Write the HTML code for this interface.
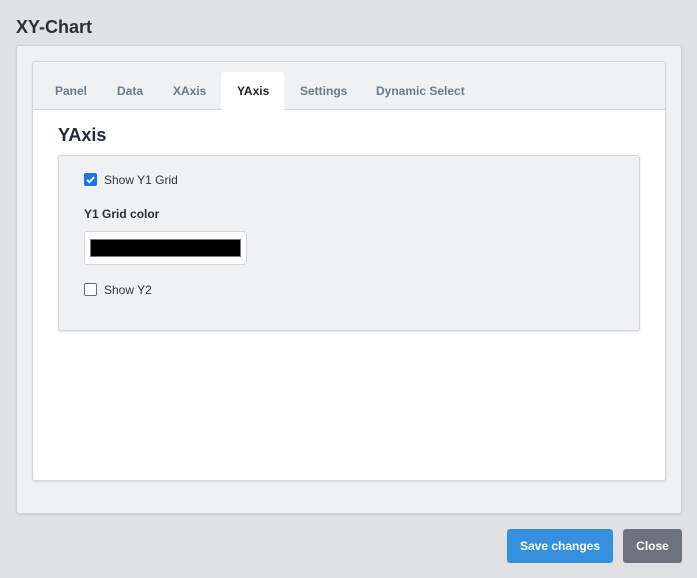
<!DOCTYPE html>
<html><head><style>
*{box-sizing:border-box;margin:0;padding:0}
body{width:697px;height:578px;background:#dfe1e5;font-family:"Liberation Sans",sans-serif;position:relative;overflow:hidden}
.a{position:absolute}
.tab{position:absolute;top:84px;font-size:12px;font-weight:bold;color:#6b7b8c}
.cb{position:absolute;width:13px;height:13px;border-radius:2px}
</style></head><body>
<div class="a" style="left:16px;top:17px;font-size:18px;font-weight:bold;color:#2d2f33">XY-Chart</div>
<div class="a" style="left:16px;top:45px;width:666px;height:469px;background:#f0f1f3;border:1px solid #cfd2d6;border-radius:3px;box-shadow:0 1px 2px rgba(0,0,0,.1)"></div>
<div class="a" style="left:32px;top:61px;width:634px;height:420px;background:#fff;border:1px solid #d4d7db;border-radius:3px;box-shadow:0 1px 2px rgba(0,0,0,.12)"></div>
<div class="a" style="left:33px;top:62px;width:632px;height:48px;background:#f0f1f3;border-bottom:1px solid #d4d7db"></div>
<div class="a" style="left:221px;top:72px;width:63px;height:39px;background:#fff;border-radius:3px 3px 0 0"></div>
<div class="tab" style="left:55px">Panel</div>
<div class="tab" style="left:117px">Data</div>
<div class="tab" style="left:173px">XAxis</div>
<div class="tab" style="left:237px;color:#1f2328">YAxis</div>
<div class="tab" style="left:300px">Settings</div>
<div class="tab" style="left:376px">Dynamic Select</div>
<div class="a" style="left:58px;top:125px;font-size:18px;font-weight:bold;color:#1e2a38">YAxis</div>
<div class="a" style="left:58px;top:155px;width:582px;height:176px;background:#f0f1f3;border:1px solid #d4d7db;border-radius:3px;box-shadow:0 1px 2px rgba(0,0,0,.12)"></div>
<div class="cb" style="left:84px;top:173px;background:#1a73e8"><svg width="13" height="13" viewBox="0 0 13 13" style="position:absolute;left:0;top:0"><path d="M3 6.8l2.4 2.4L10 4.2" stroke="#fff" stroke-width="2" fill="none"/></svg></div>
<div class="a" style="left:104px;top:173px;font-size:12px;color:#333">Show Y1 Grid</div>
<div class="a" style="left:84px;top:207px;font-size:12px;font-weight:bold;color:#2d2f33">Y1 Grid color</div>
<div class="a" style="left:84px;top:231px;width:163px;height:34px;background:#fff;border:1px solid #d4d7db;border-radius:3px"></div>
<div class="a" style="left:90px;top:239px;width:151px;height:18px;background:#000;border:1px solid #777"></div>
<div class="cb" style="left:84px;top:283px;background:#fff;border:1px solid #6b6f75"></div>
<div class="a" style="left:104px;top:283px;font-size:12px;color:#333">Show Y2</div>
<div class="a" style="left:507px;top:529px;width:106px;height:34px;background:#3590e0;border-radius:3px;color:#fff;font-size:12px;font-weight:bold;text-align:center;line-height:34px">Save changes</div>
<div class="a" style="left:623px;top:529px;width:59px;height:34px;background:#6c737c;border-radius:3px;color:#fff;font-size:12px;font-weight:bold;text-align:center;line-height:34px">Close</div>
</body></html>
